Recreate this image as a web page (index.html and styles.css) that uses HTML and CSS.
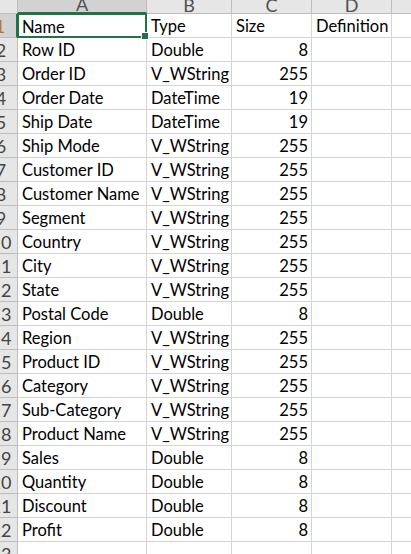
FILE: index.html
```html
<!DOCTYPE html>
<html>
<head>
<meta charset="utf-8">
<link rel="stylesheet" href="styles.css">
</head>
<body>
<div class="sheet">
  <div class="ch corner"></div>
  <div class="ch sel"><span>A</span></div>
  <div class="ch"><span>B</span></div>
  <div class="ch"><span>C</span></div>
  <div class="ch"><span>D</span></div>
  <div class="ch last"></div>

  <div class="rh selrow"><span>1</span></div><div class="c active">Name</div><div class="c">Type</div><div class="c">Size</div><div class="c">Definition</div><div class="c last"></div>
  <div class="rh"><span>2</span></div><div class="c">Row ID</div><div class="c">Double</div><div class="c num">8</div><div class="c"></div><div class="c last"></div>
  <div class="rh"><span>3</span></div><div class="c">Order ID</div><div class="c">V_WString</div><div class="c num">255</div><div class="c"></div><div class="c last"></div>
  <div class="rh"><span>4</span></div><div class="c">Order Date</div><div class="c">DateTime</div><div class="c num">19</div><div class="c"></div><div class="c last"></div>
  <div class="rh"><span>5</span></div><div class="c">Ship Date</div><div class="c">DateTime</div><div class="c num">19</div><div class="c"></div><div class="c last"></div>
  <div class="rh"><span>6</span></div><div class="c">Ship Mode</div><div class="c">V_WString</div><div class="c num">255</div><div class="c"></div><div class="c last"></div>
  <div class="rh"><span>7</span></div><div class="c">Customer ID</div><div class="c">V_WString</div><div class="c num">255</div><div class="c"></div><div class="c last"></div>
  <div class="rh"><span>8</span></div><div class="c">Customer Name</div><div class="c">V_WString</div><div class="c num">255</div><div class="c"></div><div class="c last"></div>
  <div class="rh"><span>9</span></div><div class="c">Segment</div><div class="c">V_WString</div><div class="c num">255</div><div class="c"></div><div class="c last"></div>
  <div class="rh"><span>10</span></div><div class="c">Country</div><div class="c">V_WString</div><div class="c num">255</div><div class="c"></div><div class="c last"></div>
  <div class="rh"><span>11</span></div><div class="c">City</div><div class="c">V_WString</div><div class="c num">255</div><div class="c"></div><div class="c last"></div>
  <div class="rh"><span>12</span></div><div class="c">State</div><div class="c">V_WString</div><div class="c num">255</div><div class="c"></div><div class="c last"></div>
  <div class="rh"><span>13</span></div><div class="c">Postal Code</div><div class="c">Double</div><div class="c num">8</div><div class="c"></div><div class="c last"></div>
  <div class="rh"><span>14</span></div><div class="c">Region</div><div class="c">V_WString</div><div class="c num">255</div><div class="c"></div><div class="c last"></div>
  <div class="rh"><span>15</span></div><div class="c">Product ID</div><div class="c">V_WString</div><div class="c num">255</div><div class="c"></div><div class="c last"></div>
  <div class="rh"><span>16</span></div><div class="c">Category</div><div class="c">V_WString</div><div class="c num">255</div><div class="c"></div><div class="c last"></div>
  <div class="rh"><span>17</span></div><div class="c">Sub-Category</div><div class="c">V_WString</div><div class="c num">255</div><div class="c"></div><div class="c last"></div>
  <div class="rh"><span>18</span></div><div class="c">Product Name</div><div class="c">V_WString</div><div class="c num">255</div><div class="c"></div><div class="c last"></div>
  <div class="rh"><span>19</span></div><div class="c">Sales</div><div class="c">Double</div><div class="c num">8</div><div class="c"></div><div class="c last"></div>
  <div class="rh"><span>20</span></div><div class="c">Quantity</div><div class="c">Double</div><div class="c num">8</div><div class="c"></div><div class="c last"></div>
  <div class="rh"><span>21</span></div><div class="c">Discount</div><div class="c">Double</div><div class="c num">8</div><div class="c"></div><div class="c last"></div>
  <div class="rh"><span>22</span></div><div class="c">Profit</div><div class="c">Double</div><div class="c num">8</div><div class="c"></div><div class="c last"></div>
  <div class="rh"><span>23</span></div><div class="c"></div><div class="c"></div><div class="c"></div><div class="c"></div><div class="c last"></div>
</div>
</body>
</html>
```

FILE: styles.css
```css
* { box-sizing: border-box; }
html, body { margin: 0; padding: 0; background: #fff; }
body {
  width: 411px;
  height: 554px;
  overflow: hidden;
  font-family: Lato, "Open Sans", sans-serif;
  font-size: 16.5px;
  color: #000;
}
.sheet {
  display: grid;
  grid-template-columns: 18px 129px 85px 80px 80px 19px;
  grid-template-rows: 14px repeat(23, 24px);
}
.ch {
  background: #e6e6e6;
  border-right: 1px solid #bdbdbd;
  border-bottom: 1px solid #bdbdbd;
  overflow: hidden;
  display: flex;
  justify-content: center;
  align-items: flex-end;
  color: #505050;
}
.ch span {
  display: block;
  line-height: 24px;
  height: 24px;
  margin-bottom: -4px;
  font-size: 18px;
}
.ch.sel { background: #d2d2d2; border-bottom: 2px solid #217346; }
.ch.last { border-right: none; }
.rh {
  background: #e6e6e6;
  border-right: 1px solid #bdbdbd;
  border-bottom: 1px solid #bdbdbd;
  overflow: hidden;
  position: relative;
  color: #444;
}
.rh span {
  position: absolute;
  right: 1px;
  top: 1px;
  width: 30px;
  line-height: 23px;
  text-align: center;
  font-size: 18px;
}
.rh.selrow { background: #d2d2d2; color: #b07a1e; border-right: 2px solid #217346; }
.c {
  border-right: 1px solid #d4d4d4;
  border-bottom: 1px solid #d4d4d4;
  padding: 1px 3px 0 4px;
  line-height: 23px;
  white-space: nowrap;
  overflow: visible;
}
.c.num { text-align: right; }
.c.last { border-right: none; }
.c.active {
  position: relative;
  margin: -1px 0 0 -1px;
  border: 2px solid #217346;
  line-height: 22px;
  padding-left: 3px;
}
.c.active::after {
  content: "";
  position: absolute;
  right: -4px;
  bottom: -4px;
  width: 6px;
  height: 6px;
  background: #217346;
  border: 1px solid #fff;
}
```
